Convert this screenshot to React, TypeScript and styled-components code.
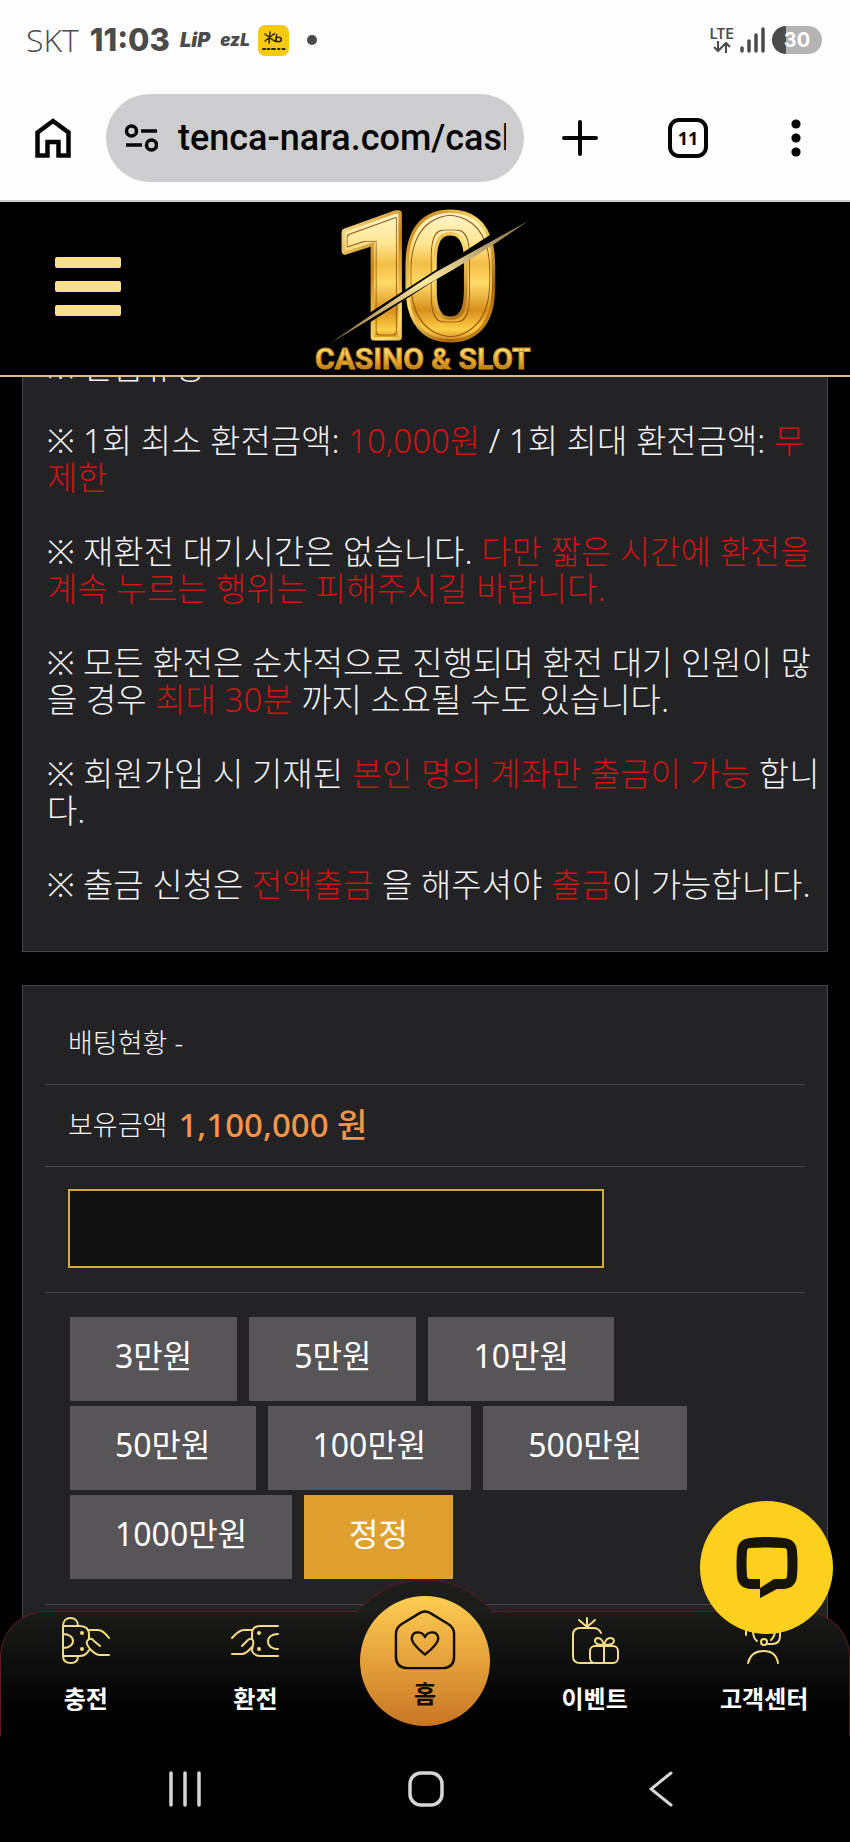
import React from 'react';
import styled, { createGlobalStyle } from 'styled-components';

const GlobalStyle = createGlobalStyle`
  * { box-sizing: border-box; }
  body { margin: 0; background: #000; }
  button, input { font: inherit; color: inherit; }
  button { border: 0; padding: 0; background: none; cursor: pointer; }
  svg { display: block; }
`;

const korean = `'Noto Sans', 'Noto Sans CJK KR', sans-serif`;

const Screen = styled.div`
  display: flex;
  flex-direction: column;
  height: 100vh;
  overflow: hidden;
  background: #000;
  color: #f4f4f4;
  font-family: ${korean};
`;

/* ---------- phone status bar ---------- */

const StatusBar = styled.div`
  display: flex;
  flex: none;
  align-items: center;
  height: 80px;
  padding: 0 28px 0 26px;
  background: #fdfdfd;
  color: #4b4b4b;
`;

const Carrier = styled.span`
  font: 300 32px/40px 'Open Sans', sans-serif;
`;

const Clock = styled.time`
  margin-left: 11px;
  font: 800 31px/40px Inter, sans-serif;
`;

const AppMark = styled.span<{ $size: number }>`
  margin-left: 10px;
  font: italic 900 ${(p) => p.$size}px/40px Inter, sans-serif;
`;

const StatusIcons = styled.div`
  display: flex;
  align-items: center;
  gap: 6px;
  margin-left: auto;
`;

const Network = styled.div`
  display: flex;
  flex-direction: column;
  align-items: center;
  font: 600 14px/14px Inter, sans-serif;
`;

const Battery = styled.span`
  width: 50px;
  height: 28px;
  border-radius: 14px;
  background: linear-gradient(90deg, #4b4b4b 0 14px, #b3b3b3 14px);
  color: #fff;
  font: 700 20px/28px Inter, sans-serif;
  text-align: center;
`;

/* ---------- browser bar ---------- */

const BrowserBar = styled.div`
  display: flex;
  flex: none;
  align-items: center;
  height: 122px;
  padding: 0 36px 4px 34px;
  border-bottom: 2px solid #c9cacc;
  background: #fdfdfe;
  color: #060606;
`;

const AddressField = styled.label`
  display: flex;
  flex: 1;
  align-items: center;
  gap: 20px;
  min-width: 0;
  height: 88px;
  margin: 0 38px 0 34px;
  padding: 0 18px;
  border-radius: 44px;
  background: #cdcdcf;
`;

const Address = styled.input`
  flex: 1;
  min-width: 0;
  height: 60px;
  padding: 0;
  border: 0;
  outline: 0;
  background: none;
  font: 500 36px/60px Roboto, sans-serif;
`;

const BrowserActions = styled.div`
  display: flex;
  align-items: center;
  gap: 70px;
`;

const TabCount = styled.button`
  width: 40px;
  height: 40px;
  border: 4px solid #060606;
  border-radius: 11px;
  font: 700 18px/32px 'Open Sans', sans-serif;
`;

/* ---------- site header ---------- */

const SiteHeader = styled.header`
  position: relative;
  z-index: 1;
  display: grid;
  flex: none;
  grid-template-columns: 1fr auto 1fr;
  align-items: center;
  height: 175px;
  padding: 0 55px;
  border-bottom: 2px solid #d9bd86;
  background: #000;
`;

const MenuButton = styled.button`
  display: flex;
  flex-direction: column;
  gap: 13px;
  width: 66px;
  margin-bottom: 4px;
`;

const MenuBar = styled.span`
  height: 11px;
  border-radius: 2px;
  background: #fae08c;
`;

const LogoLink = styled.a`
  display: block;
  height: 173px;
`;

/* ---------- content ---------- */

const Content = styled.main`
  flex: 1;
  min-height: 0;
  overflow: hidden;
  padding: 0 22px;
`;

const Panel = styled.section`
  border: 1px solid #48474a;
  background: #232224;
`;

const Notice = styled(Panel)`
  margin-top: -31px;
  padding: 1px 0 48px 24px;
`;

const NoticeLine = styled.p`
  margin: 0 0 37px;
  font-size: 33px;
  font-weight: 300;
  line-height: 37px;
  white-space: nowrap;

  &:last-child { margin-bottom: 0; }
`;

const Red = styled.span`
  color: #d01414;
`;

const CashForm = styled(Panel)`
  margin-top: 33px;
  padding: 16px 22px 40px;
`;

const FormRow = styled.div<{ $height: number }>`
  display: flex;
  align-items: center;
  min-height: ${(p) => p.$height}px;
  padding: 0 23px 2px;
  border-bottom: 1px solid #48474a;
`;

const RowLabel = styled.span`
  font-size: 27px;
  font-weight: 300;
  line-height: 37px;
`;

const Amount = styled.strong`
  margin-left: 11px;
  color: #f2954a;
  font-size: 33px;
  font-weight: 500;
  line-height: 37px;
`;

const AmountInput = styled.input`
  width: 536px;
  max-width: 100%;
  height: 79px;
  padding: 0 20px;
  border: 2px solid #cfa93f;
  border-radius: 0;
  outline: 0;
  background: #111112;
  font-size: 32px;
`;

const Presets = styled.div`
  display: flex;
  flex-wrap: wrap;
  gap: 5px 12px;
  width: 630px;
  max-width: 100%;
  padding: 0 2px;
`;

const PresetButton = styled.button<{ $accent?: boolean }>`
  height: 84px;
  padding: 0 45px 6px;
  background: ${(p) => (p.$accent ? '#e0a030' : '#575557')};
  color: #fff;
  font-size: 32px;
  line-height: 37px;
`;

/* ---------- bottom navigation ---------- */

const BottomNav = styled.nav`
  position: relative;
  z-index: 2;
  display: grid;
  flex: none;
  grid-template-columns: repeat(5, 1fr);
  height: 125px;
  margin-top: -125px;
  border: 1px solid #5c1c20;
  border-bottom: 0;
  border-radius: 46px 46px 0 0;
  background: linear-gradient(#1b1b1a, #030303 75%, #000);
`;

const NavItem = styled.a`
  display: flex;
  flex-direction: column;
  align-items: center;
  gap: 16px;
  padding-top: 5px;
  color: #fff;
  font-size: 24px;
  font-weight: 700;
  line-height: 36px;
  text-decoration: none;
`;

const HomeSlot = styled.div`
  position: relative;
`;

const Hump = styled.svg`
  position: absolute;
  bottom: 100%;
  left: 50%;
  margin-bottom: -1px;
  transform: translateX(-50%);
`;

const HomeButton = styled.a`
  position: absolute;
  top: -16px;
  left: 50%;
  display: flex;
  flex-direction: column;
  align-items: center;
  width: 130px;
  height: 130px;
  margin-left: -65px;
  padding-top: 13px;
  border-radius: 50%;
  background: linear-gradient(#ffcd52, #c97524);
  color: #120c04;
  font-size: 24px;
  font-weight: 700;
  line-height: 46px;
  text-decoration: none;
`;

const ChatButton = styled.button`
  position: absolute;
  right: 16px;
  bottom: 102px;
  display: grid;
  place-items: center;
  width: 133px;
  height: 133px;
  border-radius: 50%;
  background: #fed01e;
`;

/* ---------- phone navigation keys ---------- */

const SystemNav = styled.div`
  display: flex;
  flex: none;
  justify-content: space-between;
  height: 106px;
  padding: 0 177px 0 167px;
  background: #000;
`;

const presets = ['3만원', '5만원', '10만원', '50만원', '100만원', '500만원', '1000만원'];

const gold = { fill: 'none', stroke: '#f3dc86', strokeWidth: 2, strokeLinecap: 'round', strokeLinejoin: 'round' } as const;

const Logo = () => (
  <svg width="240" height="173" viewBox="305 203 240 173" role="img" aria-label="10 CASINO & SLOT">
    <defs>
      <linearGradient id="face" gradientUnits="userSpaceOnUse" x1="0" y1="212" x2="0" y2="344">
        <stop offset="0" stopColor="#fff6cc" />
        <stop offset="0.25" stopColor="#ffe590" />
        <stop offset="0.4" stopColor="#f2bf45" />
        <stop offset="0.55" stopColor="#ffd968" />
        <stop offset="0.75" stopColor="#d8901c" />
        <stop offset="0.9" stopColor="#ffcf48" />
        <stop offset="1" stopColor="#c47a12" />
      </linearGradient>
      <linearGradient id="rim" gradientUnits="userSpaceOnUse" x1="340" y1="212" x2="500" y2="344">
        <stop offset="0" stopColor="#fff0a0" />
        <stop offset="0.3" stopColor="#c98516" />
        <stop offset="0.55" stopColor="#ffe070" />
        <stop offset="0.8" stopColor="#a8630b" />
        <stop offset="1" stopColor="#e9a92c" />
      </linearGradient>
      <linearGradient id="word" x1="0" y1="0" x2="0" y2="1">
        <stop offset="0.2" stopColor="#ffe27a" />
        <stop offset="0.6" stopColor="#e3a52c" />
        <stop offset="0.9" stopColor="#a8650c" />
      </linearGradient>
      <linearGradient id="blade" x1="0" y1="1" x2="1" y2="0">
        <stop offset="0" stopColor="#8a6a38" />
        <stop offset="0.5" stopColor="#ffe9a0" />
        <stop offset="1" stopColor="#7d6a48" />
      </linearGradient>
      <filter id="bevel">
        <feMorphology in="SourceAlpha" operator="erode" radius="5" result="outer" />
        <feMorphology in="SourceAlpha" operator="erode" radius="6" result="inner" />
        <feComposite in="outer" in2="inner" operator="out" result="ring" />
        <feFlood floodColor="#98590a" />
        <feComposite in2="ring" operator="in" result="groove" />
        <feMerge>
          <feMergeNode in="SourceGraphic" />
          <feMergeNode in="groove" />
        </feMerge>
      </filter>
    </defs>
    <g
      fontFamily="Roboto, sans-serif"
      fontWeight="700"
      fontSize="172"
      fill="url(#face)"
      stroke="url(#rim)"
      strokeWidth="7"
      strokeLinejoin="round"
      paintOrder="stroke"
      filter="url(#bevel)"
    >
      <text x="331" y="338">1</text>
      <text x="401" y="338">0</text>
    </g>
    <path d="M326 342L524 214 528 221 332 348z" fill="#000" />
    <path d="M329 345Q400 296 436 273L528 222Q480 256 430 284z" fill="url(#blade)" />
    <text x="315" y="370" fontFamily="Roboto, sans-serif" fontWeight="700" fontSize="30" fill="url(#word)" stroke="#c98a1c" strokeWidth="1">
      CASINO &amp; SLOT
    </text>
  </svg>
);

const KbBadge = () => (
  <svg width="31" height="31" viewBox="0 0 31 31" style={{ marginLeft: 8 }} aria-hidden="true">
    <rect width="31" height="31" rx="7" fill="#f8c914" />
    <g stroke="#2b240c" strokeWidth="1.500" fill="none" strokeLinecap="round">
      <path d="M12 7l-1 11M7 9l10 7.500M16.500 8.500L7 16M18.500 9.500l-.8 7" />
      <ellipse cx="20.500" cy="14.500" rx="2.800" ry="2.200" />
      <path d="M5 24h2M9.500 24h2M14 24h3M20 24h1.500M24.500 24h2" strokeWidth="2" />
    </g>
  </svg>
);

const DepositIcon = () => (
  <svg width="48" height="48" viewBox="0 0 48 48" {...gold}>
    <path d="M1 9v30c0 5 3 7 8 7s7-3 7-7M1 9c0-5 3-8 7.500-8S16 4 16 9M1 9h17c6 0 9 3 9 9M1 39h17c5 0 7-2 9-6M1 17c6 0 10 3 10 7s-4 7-10 7" />
    <path d="M26 13h10q5 0 11 8M27 18v4q-3 2-2 5t4 6q5 5 9 5h9M26 23q3-3 6 1l6 5" />
    <circle cx="20" cy="16" r="1" /><circle cx="20" cy="32" r="1" />
  </svg>
);

const WithdrawIcon = () => (
  <svg width="48" height="48" viewBox="0 0 48 48" {...gold}>
    <path d="M47 9H29c-5 0-8 3-8 8v5q2 2 1 6t-1 6q2 5 8 5h18M47 17c-6 0-10 3-10 7.500S41 32 47 32" />
    <path d="M21 13H13q-5 0-12 8M1 37h10q4 0 10-7M21 22q-2-1-4 1l-6 6" />
    <circle cx="28" cy="16" r="1" /><circle cx="28" cy="32" r="1" />
  </svg>
);

const EventIcon = () => (
  <svg width="48" height="48" viewBox="0 0 48 48" {...gold}>
    <path d="M22 46H9q-7 0-7-7V18q0-7 7-7h13q6 0 8 5M16 11V1M16 10L8 3M16 10l8-7" />
    <rect x="19" y="29" width="28" height="17" rx="5" />
    <path d="M33 29v17M33 28q-9 0-9-4 0-3 3-3 4 0 6 7 2-7 6-7 4 0 4 3 0 4-10 4" />
  </svg>
);

const SupportIcon = () => (
  <svg width="48" height="48" viewBox="0 0 48 48" {...gold}>
    <path d="M8 46q3-12 15.500-12T38 46M6 14v4M13 14q0 7 4 10M35 14q0 5-4 9M40 14v5q0 8-8 8h-5" />
    <circle cx="24" cy="25" r="3" />
  </svg>
);

export default function App() {
  return (
    <>
      <GlobalStyle />
      <Screen>
        <StatusBar>
          <Carrier>SKT</Carrier>
          <Clock>11:03</Clock>
          <AppMark $size={20}>LiP</AppMark>
          <AppMark $size={17}>ezL</AppMark>
          <KbBadge />
          <svg width="10" height="10" viewBox="0 0 10 10" style={{ marginLeft: 18 }} aria-hidden="true">
            <circle cx="5" cy="5" r="5" fill="#4b4b4b" />
          </svg>
          <StatusIcons>
            <Network>
              LTE
              <svg width="18" height="12" viewBox="0 0 18 12" fill="none" stroke="#4b4b4b" strokeWidth="2">
                <path d="M5 0v10M1 6l4 4 4-4M13 12V2M9 6l4-4 4 4" />
              </svg>
            </Network>
            <svg width="26" height="28" viewBox="0 0 26 28" stroke="#4b4b4b" strokeWidth="3.500" strokeLinecap="round">
              <path d="M2 22v3M9 15v10M16 9v16M23 3v22" />
            </svg>
            <Battery>30</Battery>
          </StatusIcons>
        </StatusBar>

        <BrowserBar>
          <button aria-label="Home page">
            <svg width="38" height="42" viewBox="0 0 38 42" fill="none" stroke="#060606" strokeWidth="4.500">
              <path d="M3.500 15.500L19 4l15.500 11.500V38.500H24.500V25h-11v13.500H3.500z" />
            </svg>
          </button>
          <AddressField>
            <svg width="34" height="30" viewBox="0 0 34 30" fill="none" stroke="#060606" strokeWidth="3.500">
              <circle cx="7.500" cy="8" r="5" />
              <circle cx="27.500" cy="22" r="5" />
              <path d="M17 8h16M2 22h16" />
            </svg>
            <Address aria-label="Address" defaultValue="tenca-nara.com/cash" />
          </AddressField>
          <BrowserActions>
            <button aria-label="New tab">
              <svg width="36" height="36" viewBox="0 0 36 36" stroke="#060606" strokeWidth="4" strokeLinecap="round">
                <path d="M18 2v32M2 18h32" />
              </svg>
            </button>
            <TabCount aria-label="Tabs">11</TabCount>
            <button aria-label="More">
              <svg width="36" height="38" viewBox="0 0 36 38" fill="#060606">
                <circle cx="18" cy="5" r="4.600" />
                <circle cx="18" cy="19" r="4.600" />
                <circle cx="18" cy="33" r="4.600" />
              </svg>
            </button>
          </BrowserActions>
        </BrowserBar>

        <SiteHeader>
          <MenuButton aria-label="Menu">
            <MenuBar />
            <MenuBar />
            <MenuBar />
          </MenuButton>
          <LogoLink href="#">
            <Logo />
          </LogoLink>
        </SiteHeader>

        <Content>
          <Notice>
            <NoticeLine>※ 환급규정</NoticeLine>
            <NoticeLine>
              ※ 1회 최소 환전금액: <Red>10,000원</Red> / 1회 최대 환전금액: <Red>무<br />제한</Red>
            </NoticeLine>
            <NoticeLine>
              ※ 재환전 대기시간은 없습니다. <Red>다만 짧은 시간에 환전을<br />계속 누르는 행위는 피해주시길 바랍니다.</Red>
            </NoticeLine>
            <NoticeLine>
              ※ 모든 환전은 순차적으로 진행되며 환전 대기 인원이 많<br />을 경우 <Red>최대 30분</Red> 까지 소요될 수도 있습니다.
            </NoticeLine>
            <NoticeLine>
              ※ 회원가입 시 기재된 <Red>본인 명의 계좌만 출금이 가능</Red> 합니<br />다.
            </NoticeLine>
            <NoticeLine>
              ※ 출금 신청은 <Red>전액출금</Red> 을 해주셔야 <Red>출금</Red>이 가능합니다.
            </NoticeLine>
          </Notice>

          <CashForm>
            <FormRow $height={83}>
              <RowLabel>배팅현황 -</RowLabel>
            </FormRow>
            <FormRow $height={82}>
              <RowLabel>보유금액</RowLabel>
              <Amount>1,100,000 원</Amount>
            </FormRow>
            <FormRow $height={126}>
              <AmountInput aria-label="환전금액" />
            </FormRow>
            <FormRow $height={312}>
              <Presets>
                {presets.map((label) => (
                  <PresetButton key={label}>{label}</PresetButton>
                ))}
                <PresetButton $accent>정정</PresetButton>
              </Presets>
            </FormRow>
          </CashForm>
        </Content>

        <BottomNav>
          <NavItem href="#"><DepositIcon />충전</NavItem>
          <NavItem href="#"><WithdrawIcon />환전</NavItem>
          <HomeSlot>
            <Hump width="138" height="34" viewBox="0 0 138 34" aria-hidden="true">
              <path d="M0 34Q28 1 69 1T138 34" fill="#1d1d1c" stroke="#5c1c20" />
            </Hump>
            <HomeButton href="#">
              <svg width="62" height="62" viewBox="0 0 64 64" fill="none" stroke="#120c04" strokeWidth="2.500" strokeLinejoin="round">
                <path d="M26 4.500q6-4 12 0l18 11q6 4 6 10V49q0 12-12 12H14Q2 61 2 49V25.500q0-6 6-10z" />
                <path d="M32 47Q17 35 18.500 29c1.500-7 11-6 13.500 0 2.500-6 12-7 13.500 0Q47 35 32 47z" />
              </svg>
              홈
            </HomeButton>
          </HomeSlot>
          <NavItem href="#"><EventIcon />이벤트</NavItem>
          <NavItem href="#"><SupportIcon />고객센터</NavItem>
          <ChatButton aria-label="Chat">
            <svg width="62" height="62" viewBox="0 0 62 62" fill="#171507" fillRule="evenodd">
              <path d="M14 1Q31-1 48 1 60 2 61 14q1 12 0 25-1 12-13 13h-7L24 61V52H14Q2 51 1 39 0 27 1 14 2 2 14 1zM14 11q-3 0-3 3-1 12 0 25 0 3 3 3h10v9l14-9h10q3 0 3-3 1-12 0-25 0-3-3-3-17-1-34 0z" />
            </svg>
          </ChatButton>
        </BottomNav>

        <SystemNav>
          <button aria-label="Recent apps">
            <svg width="36" height="36" viewBox="0 0 36 36" stroke="#d6d6d6" strokeWidth="3.500" strokeLinecap="round">
              <path d="M4 2v32M18 2v32M32 2v32" />
            </svg>
          </button>
          <button aria-label="Home">
            <svg width="36" height="36" viewBox="0 0 36 36" fill="none" stroke="#d6d6d6" strokeWidth="3.500">
              <rect x="2" y="2" width="32" height="32" rx="11" />
            </svg>
          </button>
          <button aria-label="Back">
            <svg width="24" height="36" viewBox="0 0 24 36" fill="none" stroke="#d6d6d6" strokeWidth="3" strokeLinecap="round">
              <path d="M22 2L2 18l20 16" />
            </svg>
          </button>
        </SystemNav>
      </Screen>
    </>
  );
}
